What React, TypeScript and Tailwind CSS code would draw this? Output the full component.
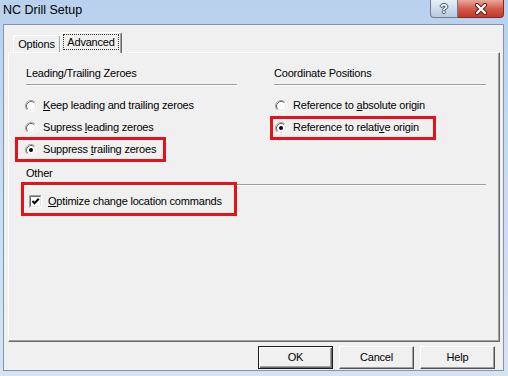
import React from "react";

// classic sunken radio button
function Radio({ checked }: { checked?: boolean }) {
  return (
    <svg width="12" height="12" viewBox="0 0 12 12" className="shrink-0">
      <circle cx="6" cy="6" r="5" fill="#ffffff" />
      <path d="M2.11 9.89 A5.5 5.5 0 0 1 9.89 2.11" fill="none" stroke="#a0a0a0" strokeWidth="1" />
      <path d="M9.89 2.11 A5.5 5.5 0 0 1 2.11 9.89" fill="none" stroke="#ffffff" strokeWidth="1" />
      <path d="M2.82 9.18 A4.5 4.5 0 0 1 9.18 2.82" fill="none" stroke="#696969" strokeWidth="1" />
      <path d="M9.18 2.82 A4.5 4.5 0 0 1 2.82 9.18" fill="none" stroke="#e3e3e3" strokeWidth="1" />
      {checked && <circle cx="6" cy="6" r="2" fill="#000000" />}
    </svg>
  );
}

function CheckBox() {
  return (
    <svg width="13" height="13" viewBox="0 0 13 13" className="shrink-0">
      <rect x="0" y="0" width="13" height="13" fill="#ffffff" />
      <path d="M0.5 12.5 V0.5 H12.5" fill="none" stroke="#a0a0a0" />
      <path d="M1.5 11.5 V1.5 H11.5" fill="none" stroke="#696969" />
      <path d="M1.5 12.5 H12.5 V0.5" fill="none" stroke="#ffffff" />
      <path d="M2 11.5 H11.5 V2" fill="none" stroke="#e3e3e3" />
      <path d="M3.5 6 L5.5 8.2 L9.8 3.8" fill="none" stroke="#000000" strokeWidth="2" />
    </svg>
  );
}

// red annotation frame drawn over a row
function Mark({ className }: { className: string }) {
  return <span className={`absolute border-[3px] border-[#e3131b] pointer-events-none ${className}`} />;
}

function Heading({ text, width }: { text: string; width: string }) {
  return (
    <div className={width}>
      <div className="h-[13px] leading-[13px]">{text}</div>
      <div className="mt-[4px] h-px bg-[#a0a0a0]" />
      <div className="h-px bg-white" />
    </div>
  );
}

function Button({ label, primary }: { label: string; primary?: boolean }) {
  return (
    <div
      className={
        primary
          ? "w-[75px] h-[23px] flex items-center justify-center border border-[#1e1e1e] bg-[#f0f0f0] shadow-[inset_1px_1px_0_#ffffff,inset_-1px_-1px_0_#696969,inset_-2px_-2px_0_#a0a0a0]"
          : "w-[75px] h-[23px] flex items-center justify-center border border-t-white border-l-white border-r-[#505050] border-b-[#505050] bg-[#f0f0f0] shadow-[inset_-1px_-1px_0_#a0a0a0]"
      }
    >
      {label}
    </div>
  );
}

export default function App() {
  return (
    <div className="w-[508px] h-[376px] flex flex-col overflow-hidden bg-gradient-to-b from-[#b9d1ee] via-[#c9dcf3] to-[#d5e4f5] font-['Liberation_Sans',Arial,sans-serif] text-black">
      {/* Title bar */}
      <div className="h-[24px] shrink-0 flex items-start justify-between pl-[3px] pr-[4px]">
        <span className="mt-[3px] text-[12.5px] leading-[15px]">NC Drill Setup</span>
        <div className="flex">
          <div className="w-[28px] h-[18px] flex items-center justify-center rounded-bl-[4px] border border-[#6a7b93] border-t-0 bg-gradient-to-b from-[#e8eff8] to-[#b8c9df] text-white font-bold text-[13px] leading-none [text-shadow:1px_0_0_#3e4e66,-1px_0_0_#3e4e66,0_1px_0_#3e4e66,0_-1px_0_#3e4e66]">
            ?
          </div>
          <div className="w-[46px] h-[18px] flex items-center justify-center rounded-br-[4px] border border-l-0 border-t-0 border-[#7d2a22] bg-gradient-to-b from-[#e7a79c] via-[#d45a4c] to-[#c0392d]">
            <svg width="14" height="12" viewBox="0 0 14 12">
              <path d="M3 2 L11 10 M11 2 L3 10" stroke="#5e1a14" strokeWidth="4.2" strokeLinecap="round" />
              <path d="M3 2 L11 10 M11 2 L3 10" stroke="#ffffff" strokeWidth="2.4" strokeLinecap="round" />
            </svg>
          </div>
        </div>
      </div>

      {/* Client area */}
      <div className="flex-1 ml-[3px] mr-[4px] mb-[5px] border border-[#8593a8] bg-[#f0f0f0] flex flex-col text-[11px] tracking-[-0.2px]">
        {/* Tabs */}
        <div className="h-[27px] pt-[7px] pl-[9px] flex items-end">
          <div className="w-[47px] h-[17px] flex items-center justify-center border-l border-t border-white border-r border-r-[#a0a0a0] rounded-t-[2px]">
            Options
          </div>
          <div className="relative z-10 -mb-px w-[62px] h-[21px] flex items-start justify-center pt-[1px] border-l border-t border-white border-r border-r-[#696969] rounded-t-[2px] bg-[#f0f0f0] shadow-[inset_-1px_0_0_#a0a0a0]">
            <span className="h-[16px] px-[3px] leading-[15px] border border-dotted border-[#333333]">Advanced</span>
          </div>
        </div>

        {/* Panel */}
        <div className="ml-[4px] mr-[3px] h-[290px] border border-t-white border-l-white border-r-[#696969] border-b-[#696969] shadow-[inset_-1px_-1px_0_#a0a0a0] pl-[17px] pt-[14px]">
          <div className="flex items-start gap-[37px]">
            {/* Leading / trailing zeroes */}
            <div className="w-[211px] flex flex-col">
              <Heading text="Leading/Trailing Zeroes" width="w-[211px]" />
              <div className="mt-[13px] flex flex-col gap-[9px] -ml-[1px]">
                <div className="h-[13px] flex items-center gap-[6px]">
                  <Radio />
                  <span className="leading-[13px]">
                    <u>K</u>eep leading and trailing zeroes
                  </span>
                </div>
                <div className="h-[13px] flex items-center gap-[6px]">
                  <Radio />
                  <span className="leading-[13px]">
                    Supress <u>l</u>eading zeroes
                  </span>
                </div>
                <div className="relative h-[13px] flex items-center gap-[6px]">
                  <Radio checked />
                  <span className="leading-[13px]">
                    Suppress <u>t</u>railing zeroes
                  </span>
                  <Mark className="-left-[10px] -top-[6px] w-[151px] h-[25px]" />
                </div>
              </div>
            </div>

            {/* Coordinate positions */}
            <div className="w-[212px] flex flex-col">
              <Heading text="Coordinate Positions" width="w-[212px]" />
              <div className="mt-[13px] flex flex-col gap-[9px] ml-[1px]">
                <div className="h-[13px] flex items-center gap-[6px]">
                  <Radio />
                  <span className="leading-[13px]">
                    Reference to <u>a</u>bsolute origin
                  </span>
                </div>
                <div className="relative h-[13px] flex items-center gap-[6px]">
                  <Radio checked />
                  <span className="leading-[13px]">
                    Reference to relati<u>v</u>e origin
                  </span>
                  <Mark className="-left-[5px] -top-[5px] w-[166px] h-[24px]" />
                </div>
              </div>
            </div>
          </div>

          {/* Other */}
          <div className="mt-[11px]">
            <Heading text="Other" width="w-[460px]" />
            <div className="relative mt-[9px] ml-[3px] h-[13px] flex items-center gap-[6px]">
              <CheckBox />
              <span className="leading-[13px]">
                <u>O</u>ptimize change location commands
              </span>
              <Mark className="-left-[8px] -top-[13px] w-[216px] h-[34px]" />
            </div>
          </div>
        </div>

        {/* Dialog buttons */}
        <div className="mt-[4px] pr-[8px] flex justify-end gap-[6px]">
          <Button label="OK" primary />
          <Button label="Cancel" />
          <Button label="Help" />
        </div>
      </div>
    </div>
  );
}
